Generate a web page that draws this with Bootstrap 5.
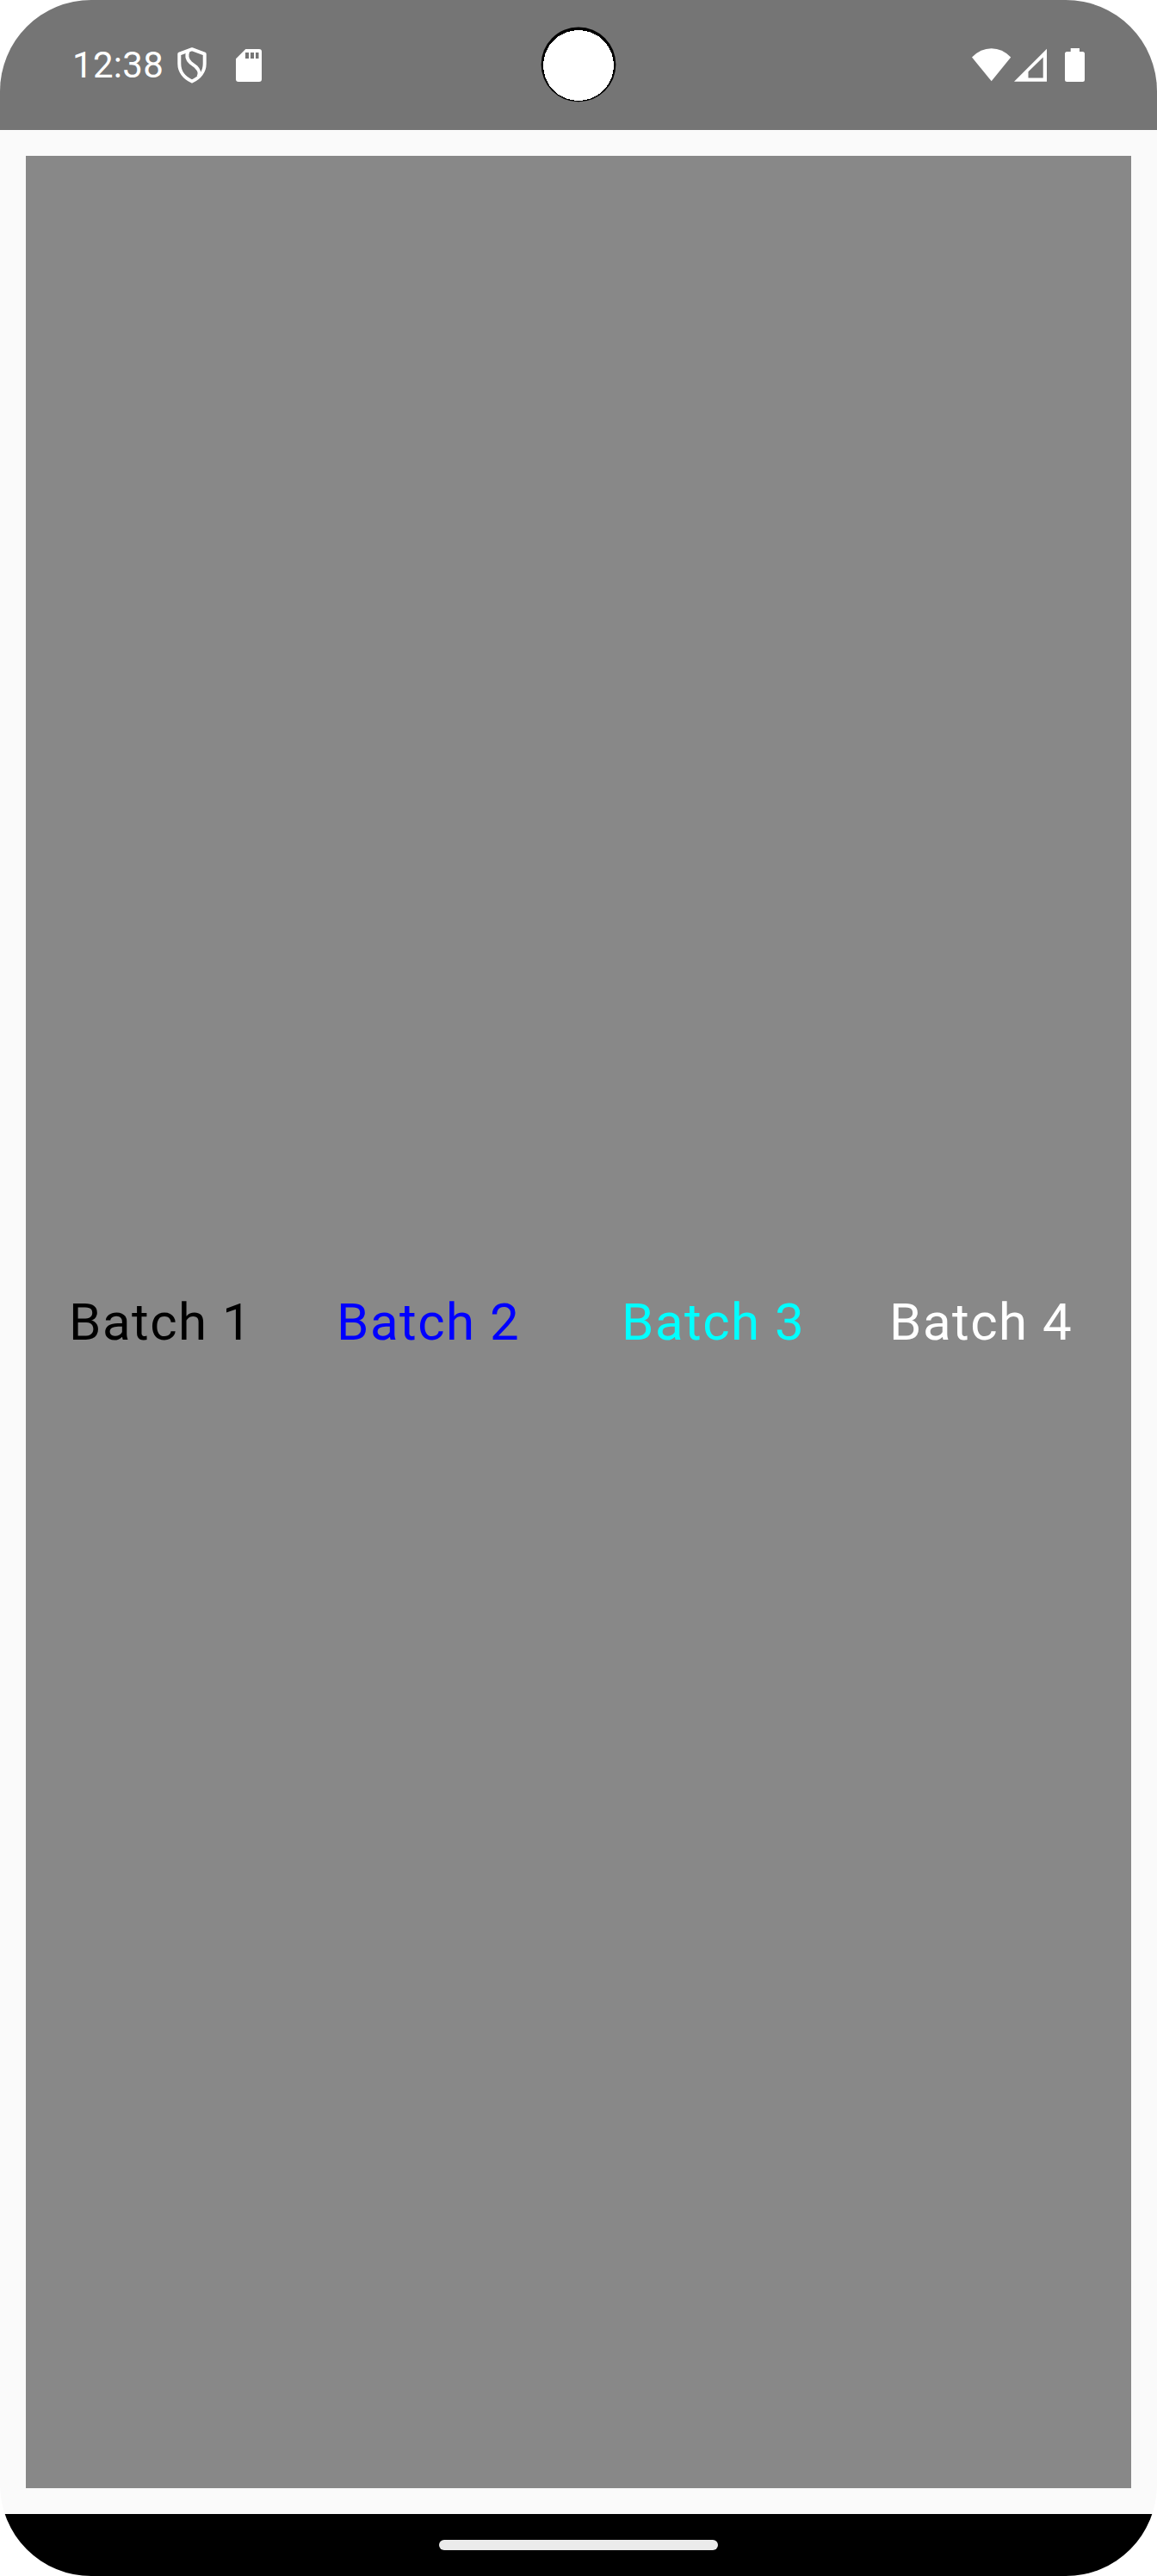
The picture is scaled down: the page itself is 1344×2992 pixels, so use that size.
<!DOCTYPE html>
<html lang="en">
<head>
<meta charset="utf-8">
<meta name="viewport" content="width=device-width, initial-scale=1">
<title>Batches</title>
<link href="https://cdn.jsdelivr.net/npm/bootstrap@5.3.0/dist/css/bootstrap.min.css" rel="stylesheet">
<style>
  body { background: #fff; font-family: Roboto, "Liberation Sans", sans-serif; }
  .phone { width: 1344px; height: 2992px; border-radius: 106px; background: #fafafa; }
  .status-bar { height: 151px; background: #757575; color: #fff; padding: 0 84px 0 84px; }
  .status-bar svg { display: block; flex: none; }
  .clock { font-size: 42px; line-height: 49px; width: 122px; letter-spacing: .3px; }
  .shield-icon { margin-right: 34px; }
  .signal-icon { margin-left: 3px; margin-right: 20px; }
  .cutout { top: 30px; left: 627px; }
  .screen { padding: 30px; }
  .panel { background: #888; }
  .batch { font-size: 60px; line-height: 70px; letter-spacing: 1.5px; white-space: nowrap; }
  .inset-wide { padding-left: 50px; }
  .inset-narrow { padding-left: 40px; }
  .batch-black { color: #000; }
  .batch-blue { color: #00f; }
  .batch-cyan { color: #0ff; }
  .batch-white { color: #fff; }
  .nav-area { height: 72px; background: #000; }
  .nav-handle { width: 324px; height: 12px; border-radius: 6px; background: #ebebeb; }
</style>
</head>
<body>
<div class="phone d-flex flex-column overflow-hidden position-relative">
  <header class="status-bar d-flex align-items-center justify-content-between">
    <div class="d-flex align-items-center">
      <span class="clock">12:38</span>
      <svg class="shield-icon" width="34" height="42" viewBox="0 0 34 42" fill="none" stroke="#fff" stroke-width="4" stroke-linejoin="round">
        <path d="M17 2.200 L31.700 7.700 V19 C31.700 28 26 35.500 17 39.500 C8 35.500 2.300 28 2.300 19 V7.700 Z"/>
        <path d="M12.500 4.500 C10 10 11 14 15.500 18 L21.500 22.500 C26 27 26.500 30 24.500 34"/>
      </svg>
      <svg width="30" height="38" viewBox="0 0 30 38">
        <path fill="#fff" fill-rule="evenodd" d="M11.300 0H27a3 3 0 0 1 3 3V35a3 3 0 0 1-3 3H3a3 3 0 0 1-3-3V11.300ZM11 4V11H15V4ZM17 4V11H21V4ZM23 4V11H26.500V4Z"/>
      </svg>
    </div>
    <div class="d-flex align-items-center">
      <svg width="46" height="39" viewBox="0 0 46 39"><path fill="#fff" d="M0 10.500Q10 .300 22.700 .300T45.200 10.500L22.700 38.300Z"/></svg>
      <svg class="signal-icon" width="39" height="39" viewBox="0 0 39 39"><path fill="#fff" fill-rule="evenodd" d="M0 38.700L38 .700V38.700ZM16.500 34.500H33.700V10.500L16.500 27.200Z"/></svg>
      <svg width="23" height="39" viewBox="0 0 23 39"><path fill="#fff" d="M6.700 0H17V4H20.500A2.500 2.500 0 0 1 23 6.500V36.500A2.500 2.500 0 0 1 20.500 39H2.500A2.500 2.500 0 0 1 0 36.500V6.500A2.500 2.500 0 0 1 2.500 4H6.700Z"/></svg>
    </div>
  </header>
  <svg class="cutout position-absolute" width="90" height="90" viewBox="0 0 90 90">
    <circle cx="45" cy="44.900" r="43.400" fill="#000"/>
    <circle cx="45" cy="46" r="41" fill="#fff" shape-rendering="crispEdges"/>
  </svg>
  <main class="screen d-flex flex-column flex-grow-1">
    <div class="panel d-flex flex-grow-1 align-items-center">
      <div class="row g-0 w-100">
        <div class="col-3 batch batch-black inset-wide">Batch 1</div>
        <div class="col-3 batch batch-blue inset-narrow">Batch 2</div>
        <div class="col-3 batch batch-cyan inset-wide">Batch 3</div>
        <div class="col-3 batch batch-white inset-narrow">Batch 4</div>
      </div>
    </div>
  </main>
  <footer class="nav-area d-flex align-items-center justify-content-center">
    <div class="nav-handle"></div>
  </footer>
</div>
<script src="https://cdn.jsdelivr.net/npm/bootstrap@5.3.0/dist/js/bootstrap.bundle.min.js"></script>
</body>
</html>
